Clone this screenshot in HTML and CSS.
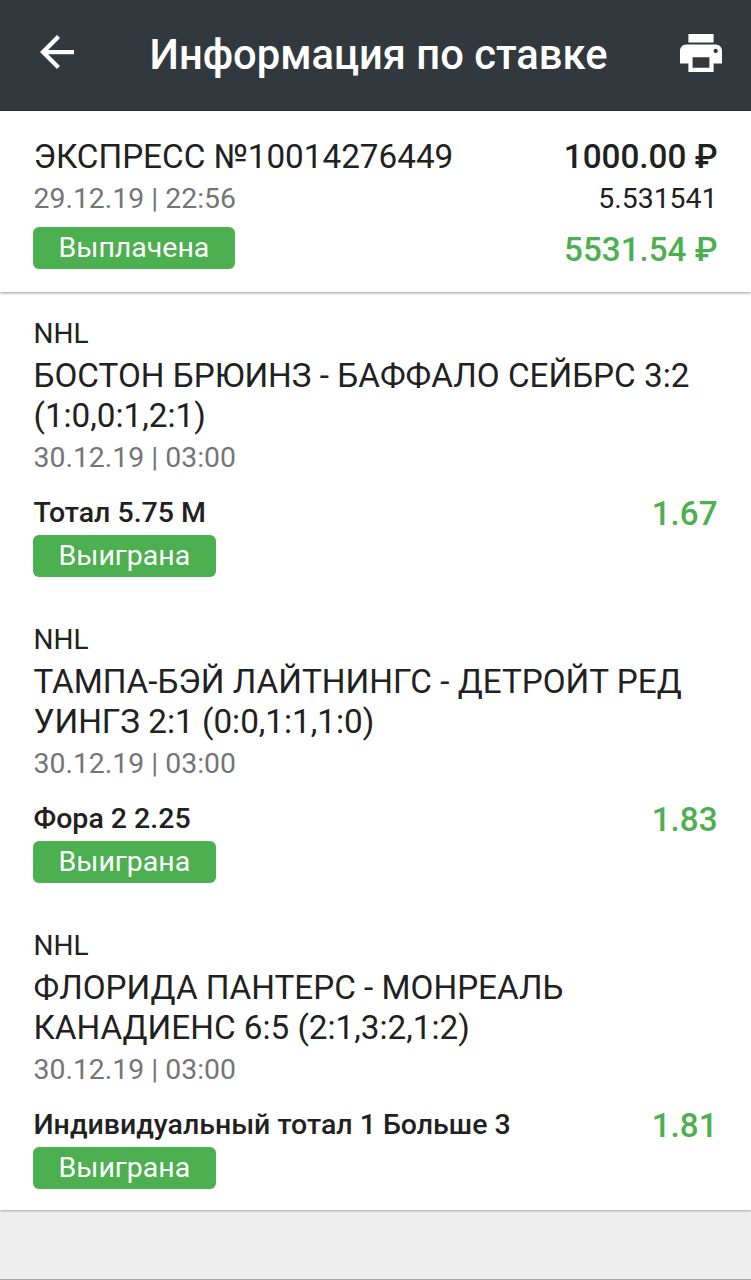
FILE: index.html
```html
<!DOCTYPE html>
<html lang="ru">
<head>
  <meta charset="UTF-8">
  <meta name="viewport" content="width=device-width, initial-scale=1.0">
  <title>Информация по ставке</title>
  <link rel="stylesheet" href="styles.css">
</head>
<body>
  <header class="header">
    <svg class="icon-back" viewBox="4 4 16 16"><path d="M20 11H7.83l5.59-5.59L12 4l-8 8 8 8 1.41-1.41L7.83 13H20v-2z"/></svg>
    <h1>Информация по ставке</h1>
    <svg class="icon-print" viewBox="2 3 20 18"><path d="M19 8H5c-1.66 0-3 1.34-3 3v6h4v4h12v-4h4v-6c0-1.66-1.34-3-3-3zm-3 11H8v-5h8v5zm3-7c-.55 0-1-.45-1-1s.45-1 1-1 1 .45 1 1-.45 1-1 1zm-1-9H6v4h12V3z"/></svg>
  </header>

  <section class="summary">
    <div class="summary-left">
      <div class="number">ЭКСПРЕСС №10014276449</div>
      <div class="date">29.12.19 | 22:56</div>
      <span class="badge">Выплачена</span>
    </div>
    <div class="summary-right">
      <div class="amount">1000.00 ₽</div>
      <div class="total-odds">5.531541</div>
      <div class="payout">5531.54 ₽</div>
    </div>
  </section>

  <main class="events">
    <article class="event">
      <div class="league">NHL</div>
      <div class="teams">БОСТОН БРЮИНЗ - БАФФАЛО СЕЙБРС 3:2<br>(1:0,0:1,2:1)</div>
      <div class="date">30.12.19 | 03:00</div>
      <div class="bet">
        <span class="outcome">Тотал 5.75 М</span>
        <span class="odds">1.67</span>
      </div>
      <span class="badge">Выиграна</span>
    </article>

    <article class="event">
      <div class="league">NHL</div>
      <div class="teams">ТАМПА-БЭЙ ЛАЙТНИНГС - ДЕТРОЙТ РЕД<br>УИНГЗ 2:1 (0:0,1:1,1:0)</div>
      <div class="date">30.12.19 | 03:00</div>
      <div class="bet">
        <span class="outcome">Фора 2 2.25</span>
        <span class="odds">1.83</span>
      </div>
      <span class="badge">Выиграна</span>
    </article>

    <article class="event">
      <div class="league">NHL</div>
      <div class="teams">ФЛОРИДА ПАНТЕРС - МОНРЕАЛЬ<br>КАНАДИЕНС 6:5 (2:1,3:2,1:2)</div>
      <div class="date">30.12.19 | 03:00</div>
      <div class="bet">
        <span class="outcome">Индивидуальный тотал 1 Больше 3</span>
        <span class="odds">1.81</span>
      </div>
      <span class="badge">Выиграна</span>
    </article>
  </main>
</body>
</html>
```
FILE: styles.css
```css
* {
  box-sizing: border-box;
}

body {
  margin: 0;
  min-height: 1280px;
  border-bottom: 1px solid #aaa;
  background-color: #ededed;
  color: #212121;
  font-family: Roboto, sans-serif;
  white-space: nowrap;
}

.header {
  display: flex;
  align-items: center;
  justify-content: space-between;
  height: 111px;
  padding: 0 29px 6px 40px;
  background-color: #31393f;
  color: white;
}

.header svg {
  fill: white;
}

.icon-back {
  width: 34px;
  height: 34px;
  margin-bottom: 2px;
}

.icon-print {
  width: 42px;
  height: 38px;
}

h1 {
  margin: 5px 0 0 3px;
  font-size: 41.7px;
  font-weight: 500;
  line-height: 48px;
}

.summary {
  position: relative;
  display: flex;
  justify-content: space-between;
  height: 181px;
  padding: 25px 33.5px 0;
  background-color: white;
  box-shadow: 0 1px 3px rgba(0, 0, 0, 0.4);
}

.summary-right {
  text-align: right;
}

.number,
.amount {
  height: 42px;
  font-size: 33.25px;
  line-height: 42px;
}

.amount,
.payout {
  font-weight: 500;
}

.total-odds {
  height: 42px;
  font-size: 28.4px;
  line-height: 42px;
}

.payout {
  margin-top: 9px;
  color: #4caf50;
  font-size: 33.2px;
  line-height: 42px;
}

.date {
  height: 42px;
  color: #757575;
  font-size: 28.4px;
  line-height: 42px;
}

.badge {
  display: block;
  width: fit-content;
  height: 42px;
  margin-left: -0.5px;
  padding: 0 25.5px;
  border-radius: 6px;
  background-color: #4caf50;
  color: white;
  font-size: 28.5px;
  line-height: 42px;
}

.summary .badge {
  margin-top: 7px;
}

.events {
  height: 918px;
  padding: 22px 33.5px 0;
  background-color: white;
  box-shadow: 0 1px 2px rgba(0, 0, 0, 0.3);
}

.event {
  height: 306px;
}

.league {
  height: 41px;
  font-size: 28px;
  line-height: 40px;
}

.teams {
  padding: 1px 0;
  font-size: 33.25px;
  line-height: 40px;
}

.bet {
  display: flex;
  align-items: center;
  justify-content: space-between;
  height: 42px;
  margin: 13px 0 1px;
}

.outcome {
  margin-bottom: 1px;
  font-size: 28.5px;
  font-weight: 500;
}

.odds {
  color: #4caf50;
  font-size: 33.2px;
  font-weight: 500;
}
```
